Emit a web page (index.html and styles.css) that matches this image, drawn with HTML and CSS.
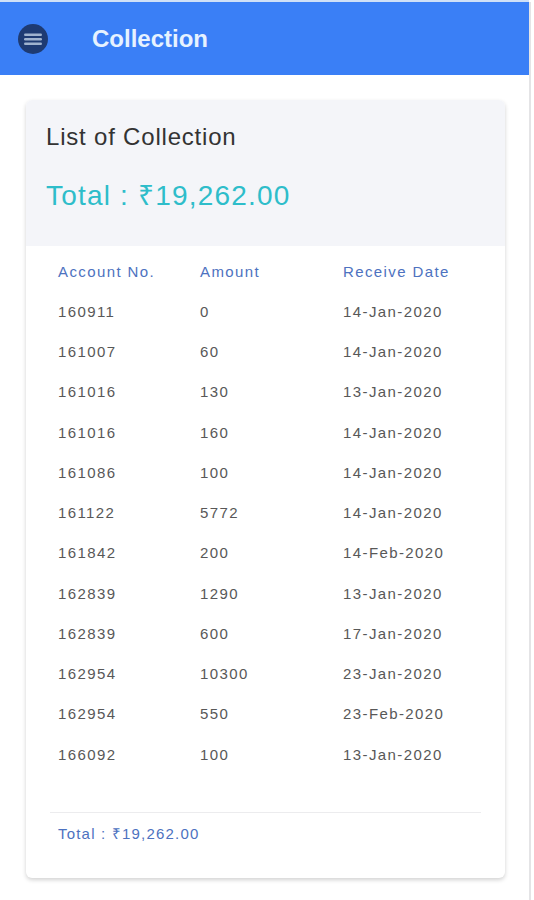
FILE: index.html
```html
<!DOCTYPE html>
<html lang="en">
<head>
    <meta name="viewport" content="width=device-width, initial-scale=1.0">
    <title>Collection</title>
    <link rel="stylesheet" href="styles.css">
</head>
<body>
    <div class="app">
        <!-- Top bar -->
        <header class="topbar">
            <button class="menu-btn" aria-label="Menu">
                <svg width="30" height="30" viewBox="0 0 30 30">
                    <circle cx="15" cy="15" r="15" fill="#1e3b73"/>
                    <rect x="6" y="9.5" width="18" height="2.4" rx="1.2" fill="#9fb3cf"/>
                    <rect x="6" y="14" width="18" height="2.4" rx="1.2" fill="#9fb3cf"/>
                    <rect x="6" y="18.5" width="18" height="2.4" rx="1.2" fill="#9fb3cf"/>
                </svg>
            </button>
            <h1 class="topbar-title">Collection</h1>
        </header>

        <div class="card">
            <div class="card-head">
                <h2 class="card-title">List of Collection</h2>
                <div class="card-total">Total : ₹19,262.00</div>
            </div>

            <div class="card-body">
                <table class="collection-table">
                    <thead>
                        <tr>
                            <th class="col-acc">Account No.</th>
                            <th class="col-amt">Amount</th>
                            <th>Receive Date</th>
                        </tr>
                    </thead>
                    <tbody>
                        <tr><td>160911</td><td>0</td><td>14-Jan-2020</td></tr>
                        <tr><td>161007</td><td>60</td><td>14-Jan-2020</td></tr>
                        <tr><td>161016</td><td>130</td><td>13-Jan-2020</td></tr>
                        <tr><td>161016</td><td>160</td><td>14-Jan-2020</td></tr>
                        <tr><td>161086</td><td>100</td><td>14-Jan-2020</td></tr>
                        <tr><td>161122</td><td>5772</td><td>14-Jan-2020</td></tr>
                        <tr><td>161842</td><td>200</td><td>14-Feb-2020</td></tr>
                        <tr><td>162839</td><td>1290</td><td>13-Jan-2020</td></tr>
                        <tr><td>162839</td><td>600</td><td>17-Jan-2020</td></tr>
                        <tr><td>162954</td><td>10300</td><td>23-Jan-2020</td></tr>
                        <tr><td>162954</td><td>550</td><td>23-Feb-2020</td></tr>
                        <tr><td>166092</td><td>100</td><td>13-Jan-2020</td></tr>
                    </tbody>
                </table>

                <div class="card-foot">Total : ₹19,262.00</div>
            </div>
        </div>
    </div>
</body>
</html>
```

FILE: styles.css
```css
body {
    margin: 0;
    font-family: "Liberation Sans", Arial, sans-serif;
    background-color: #ffffff;
}
.app {
    width: 531px;
    min-height: 900px;
    border-right: 2px solid #e4e4e6;
    box-sizing: border-box;
}
.topbar {
    display: flex;
    align-items: center;
    height: 73px;
    margin-top: 2px;
    background-color: #3a7ff6;
    box-shadow: 0 -2px 0 #cfe0f7;
}
.menu-btn {
    display: flex;
    padding: 0;
    margin-left: 18px;
    border: none;
    background: none;
}
.topbar-title {
    margin: 0 0 0 44px;
    font-size: 24px;
    font-weight: bold;
    color: #e6f2ff;
}
.card {
    width: 479px;
    margin: 25px 0 0 26px;
    border-radius: 6px;
    background-color: #ffffff;
    box-shadow: 0 2px 4px rgba(0, 0, 0, 0.18);
    overflow: hidden;
}
.card-head {
    height: 146px;
    padding: 23px 20px 0 20px;
    box-sizing: border-box;
    background-color: #f4f5f9;
}
.card-title {
    margin: 0;
    font-size: 24px;
    font-weight: normal;
    color: #333333;
    letter-spacing: 0.8px;
}
.card-total {
    margin-top: 24px;
    font-size: 28px;
    color: #2ebdca;
    letter-spacing: 1.2px;
}
.card-body {
    padding: 5px 24px 35px 24px;
}
.collection-table {
    width: 100%;
    border-collapse: collapse;
    margin-left: 8px;
}
.collection-table th,
.collection-table td {
    height: 40.25px;
    padding: 0;
    text-align: left;
    font-size: 15px;
    letter-spacing: 1.4px;
}
.collection-table th {
    font-weight: normal;
    color: #4d72c0;
}
.collection-table td {
    color: #585858;
}
.col-acc {
    width: 142px;
}
.col-amt {
    width: 143px;
}
.card-foot {
    margin-top: 38px;
    padding: 10px 0 0 8px;
    border-top: 1px solid #ececee;
    font-size: 15px;
    color: #4d72c0;
    letter-spacing: 1.2px;
}
```
